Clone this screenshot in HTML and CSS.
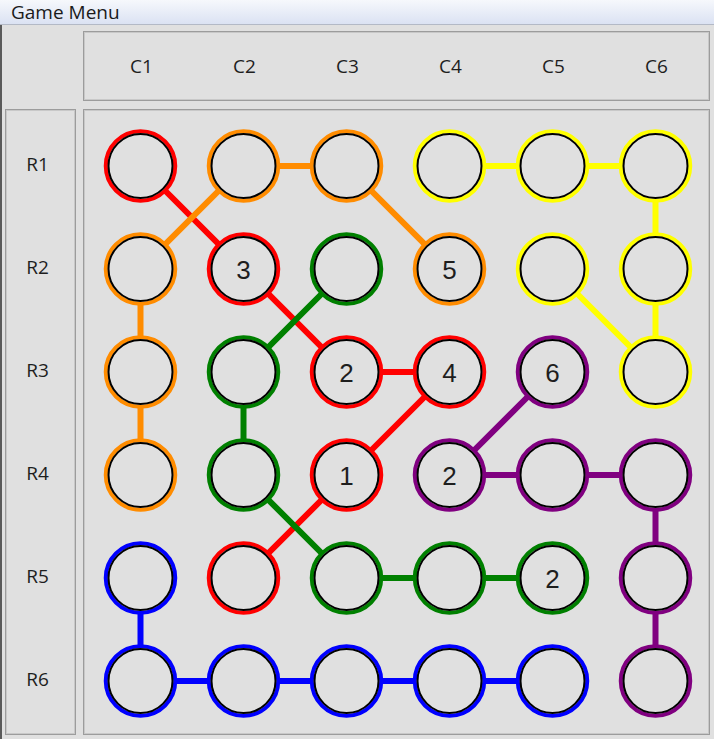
FILE: index.html
```html
<!DOCTYPE html>
<html lang="en">
<head>
    <meta charset="UTF-8">
    <meta name="viewport" content="width=device-width, initial-scale=1.0">
    <title>Game Menu</title>
    <link rel="stylesheet" href="styles.css">
</head>
<body>
    <div class="menubar">
        <span class="menu">Game Menu</span>
    </div>

    <div class="frame">
        <div class="corner"></div>

        <!-- column labels -->
        <div class="panel col-header">
            <span>C1</span>
            <span>C2</span>
            <span>C3</span>
            <span>C4</span>
            <span>C5</span>
            <span>C6</span>
        </div>

        <!-- row labels -->
        <div class="panel row-header">
            <span>R1</span>
            <span>R2</span>
            <span>R3</span>
            <span>R4</span>
            <span>R5</span>
            <span>R6</span>
        </div>

        <!-- board: cells are 103px apart -->
        <div class="panel board">
            <svg width="623" height="622" viewBox="0 0 623 622">
                <defs>
                    <g id="node">
                        <circle r="34.75" class="ring"/>
                        <circle r="32" class="edge"/>
                    </g>
                </defs>

                <!-- paths, drawn before the nodes -->
                <polyline class="path red" points="55.5,55 158.5,158 261.5,261 364.5,261 261.5,364 158.5,467"/>
                <polyline class="path orange" points="364.5,158 261.5,55 158.5,55 55.5,158 55.5,364"/>
                <polyline class="path yellow" points="364.5,55 570.5,55 570.5,261 467.5,158"/>
                <polyline class="path blue" points="55.5,467 55.5,570 467.5,570"/>
                <polyline class="path purple" points="467.5,261 364.5,364 570.5,364 570.5,570"/>
                <polyline class="path green" points="261.5,158 158.5,261 158.5,364 261.5,467 467.5,467"/>

                <!-- row 1 -->
                <use href="#node" x="55.5" y="55" class="red"/>
                <use href="#node" x="158.5" y="55" class="orange"/>
                <use href="#node" x="261.5" y="55" class="orange"/>
                <use href="#node" x="364.5" y="55" class="yellow"/>
                <use href="#node" x="467.5" y="55" class="yellow"/>
                <use href="#node" x="570.5" y="55" class="yellow"/>
                <!-- row 2 -->
                <use href="#node" x="55.5" y="158" class="orange"/>
                <use href="#node" x="158.5" y="158" class="red"/>
                <use href="#node" x="261.5" y="158" class="green"/>
                <use href="#node" x="364.5" y="158" class="orange"/>
                <use href="#node" x="467.5" y="158" class="yellow"/>
                <use href="#node" x="570.5" y="158" class="yellow"/>
                <!-- row 3 -->
                <use href="#node" x="55.5" y="261" class="orange"/>
                <use href="#node" x="158.5" y="261" class="green"/>
                <use href="#node" x="261.5" y="261" class="red"/>
                <use href="#node" x="364.5" y="261" class="red"/>
                <use href="#node" x="467.5" y="261" class="purple"/>
                <use href="#node" x="570.5" y="261" class="yellow"/>
                <!-- row 4 -->
                <use href="#node" x="55.5" y="364" class="orange"/>
                <use href="#node" x="158.5" y="364" class="green"/>
                <use href="#node" x="261.5" y="364" class="red"/>
                <use href="#node" x="364.5" y="364" class="purple"/>
                <use href="#node" x="467.5" y="364" class="purple"/>
                <use href="#node" x="570.5" y="364" class="purple"/>
                <!-- row 5 -->
                <use href="#node" x="55.5" y="467" class="blue"/>
                <use href="#node" x="158.5" y="467" class="red"/>
                <use href="#node" x="261.5" y="467" class="green"/>
                <use href="#node" x="364.5" y="467" class="green"/>
                <use href="#node" x="467.5" y="467" class="green"/>
                <use href="#node" x="570.5" y="467" class="purple"/>
                <!-- row 6 -->
                <use href="#node" x="55.5" y="570" class="blue"/>
                <use href="#node" x="158.5" y="570" class="blue"/>
                <use href="#node" x="261.5" y="570" class="blue"/>
                <use href="#node" x="364.5" y="570" class="blue"/>
                <use href="#node" x="467.5" y="570" class="blue"/>
                <use href="#node" x="570.5" y="570" class="purple"/>

                <!-- clue numbers -->
                <text class="num" x="158.5" y="167.5">3</text>
                <text class="num" x="364.5" y="167.5">5</text>
                <text class="num" x="261.5" y="270.5">2</text>
                <text class="num" x="364.5" y="270.5">4</text>
                <text class="num" x="467.5" y="270.5">6</text>
                <text class="num" x="261.5" y="373.5">1</text>
                <text class="num" x="364.5" y="373.5">2</text>
                <text class="num" x="467.5" y="476.5">2</text>
            </svg>
        </div>
    </div>
</body>
</html>
```

FILE: styles.css
```css
body {
    margin: 0;
    background-color: #e0e0e0;
    font-family: "Open Sans", "Noto Sans", sans-serif;
    color: #1e1e1e;
    width: 714px;
    height: 739px;
    overflow: hidden;
}
.menubar {
    height: 24px;
    border-bottom: 1px solid #b3b9c6;
    background: linear-gradient(#f6f8fc, #dbe2f3);
    padding-left: 11px;
    line-height: 24px;
}
.menu {
    font-size: 19px;
    color: #1a1a1a;
}
.frame {
    display: grid;
    grid-template-columns: 71px 627px;
    grid-template-rows: 70px 626px;
    column-gap: 7px;
    row-gap: 8px;
    padding: 6px 0 0 3px;
    border-left: 2px solid #5a5a5a;
    height: 714px;
    box-sizing: border-box;
}
.panel {
    box-sizing: border-box;
    border: 1px solid #9c9c9c;
    box-shadow: inset 0 0 0 1px #c8c8c8;
    padding: 1px;
}
.col-header {
    display: grid;
    grid-template-columns: repeat(6, 103px);
    align-items: center;
    justify-items: center;
    padding-left: 6px;
    font-size: 19px;
}
.row-header {
    display: grid;
    grid-template-rows: repeat(6, 103px);
    align-content: start;
    align-items: center;
    justify-items: center;
    padding-top: 2px;
    padding-right: 7px;
    font-size: 19px;
}
.board svg {
    display: block;
}
.path {
    fill: none;
    stroke-width: 6;
}
.ring {
    fill: #e0e0e0;
    stroke: currentColor;
    stroke-width: 4;
}
.edge {
    fill: none;
    stroke: #000;
    stroke-width: 2;
}
.num {
    font-family: "Liberation Sans", Arial, sans-serif;
    font-size: 26px;
    fill: #1e1e1e;
    text-anchor: middle;
}
.red { color: #ff0000; stroke: #ff0000; }
.orange { color: #ff8c00; stroke: #ff8c00; }
.yellow { color: #ffff00; stroke: #ffff00; }
.green { color: #008000; stroke: #008000; }
.blue { color: #0000ff; stroke: #0000ff; }
.purple { color: #800080; stroke: #800080; }
```
